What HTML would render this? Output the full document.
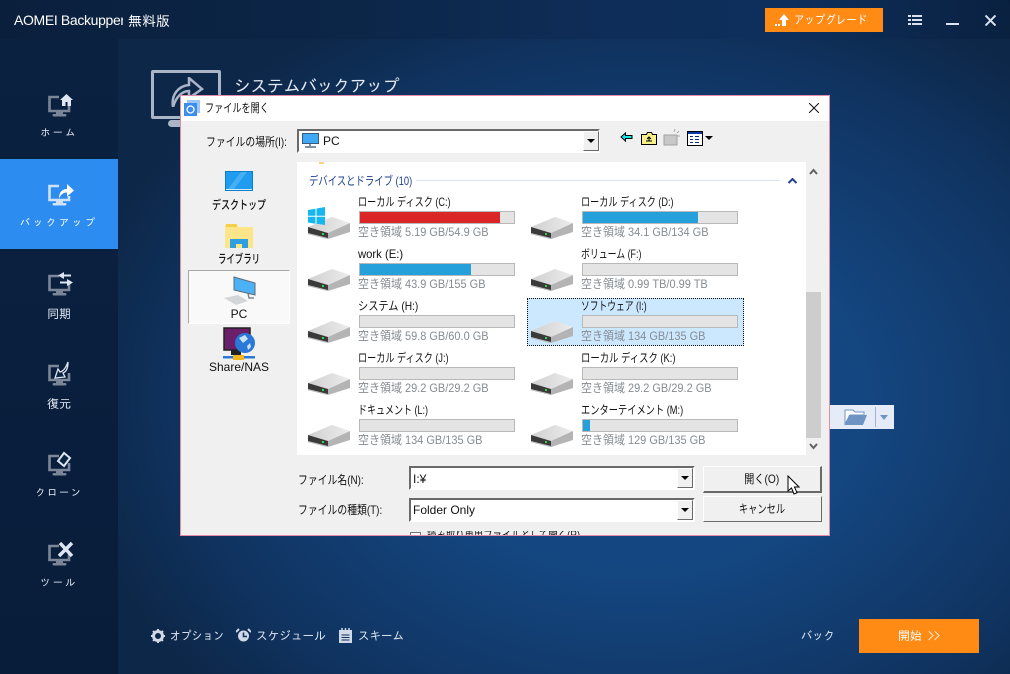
<!DOCTYPE html>
<html lang="ja"><head><meta charset="utf-8"><title>AOMEI Backupper</title>
<style>
html,body{margin:0;padding:0;width:1010px;height:674px;overflow:hidden;background:#0a1f3d}
*{box-sizing:border-box}
body{font-family:"Liberation Sans","Noto Sans CJK JP",sans-serif;font-size:12px;position:relative}
.a{position:absolute;white-space:nowrap}
#main{position:absolute;left:118px;top:39px;width:892px;height:635px;background:radial-gradient(ellipse 570px 440px at 520px 360px,#164c8c 0%,#144680 40%,#103462 78%,#0d2748 100%)}
#top{position:absolute;left:0;top:0;width:1010px;height:39px;background:linear-gradient(90deg,#0a1f3c 0%,#0c2648 35%,#0e2d58 60%,#0e2f5c 78%,#0a2140 100%);border-top-right-radius:6px}
#side{position:absolute;left:0;top:39px;width:118px;height:635px;background:linear-gradient(180deg,#0b2140,#081d3a)}
.nl{position:absolute;left:0;width:118px;text-align:center;color:#e4ebf5;font-size:10px;line-height:14px;font-family:"IPAGothic","Noto Sans CJK JP",sans-serif}
.ni{position:absolute;left:47px;width:28px;height:28px}
.f{position:absolute;line-height:14px;color:#111;white-space:nowrap;transform:scaleX(var(--s,1));transform-origin:0 50%}
.c{transform-origin:50% 50%;text-align:center}
.bar{position:absolute;width:156px;height:13px;background:#e4e4e4;border:1px solid #b8b8b8}
.bar i{display:block;height:11px;background:#26a0da}
.free{position:absolute;color:#868c92;line-height:14px;white-space:nowrap;transform:scaleX(.915);transform-origin:0 50%}
.d{position:absolute;width:43px;height:24px}
.cb{position:absolute;background:#fff;border:2px solid;border-color:#6a6a6a #fff #fff #6a6a6a}
.dd{position:absolute;width:16px;background:#f0f0f0;border:1px solid;border-color:#fff #6a6a6a #6a6a6a #fff}
.dd:after{content:"";position:absolute;left:3px;top:7px;border:4px solid transparent;border-top:4px solid #000;border-bottom:0}
.btn{position:absolute;left:703px;width:119px;background:#f0f0f0;border:1px solid;border-color:#fff #6a6a6a #6a6a6a #fff;text-align:center;color:#111;line-height:24px}
.btn span{display:inline-block;transform:scaleX(var(--s,1))}
.j{font-family:"IPAGothic","Noto Sans CJK JP",sans-serif}
</style></head><body>
<svg width="0" height="0" style="position:absolute"><defs>
<linearGradient id="tp" x1="0" y1="0" x2="1" y2="0"><stop offset="0" stop-color="#d0d0d0"/><stop offset="1" stop-color="#ececec"/></linearGradient>
<symbol id="drive" viewBox="0 0 43 24"><path d="M1 11L25 1L43 7L21 17Z" fill="url(#tp)"/><path d="M21 17L43 7V16L21 23Z" fill="#b4b4b4"/><path d="M1 11L21 17V23L1 18Z" fill="#3a3a3a"/><path d="M1 17L21 22V23L1 18Z" fill="#c4c4c4"/><rect x="15" y="17" width="2" height="2" fill="#35d04a"/></symbol>
<symbol id="mon" viewBox="0 0 28 28"><path d="M12 7H2.500V21H22V14" fill="none" stroke="#7b8798" stroke-width="2.600"/><path d="M9 22h7v2H9z" fill="#7b8798"/><rect x="5.500" y="24" width="14" height="2.500" rx="1.200" fill="#7b8798"/></symbol>
</defs></svg>

<div id="main"></div>
<div id="top"></div>
<div id="side"></div>

<div class="a" style="left:14px;top:12px;width:109px;overflow:hidden;color:#fff;font-size:14px;line-height:16px;letter-spacing:-.35px">AOMEI Backupper</div>
<div class="a j" style="left:128px;top:13px;color:#fff;font-size:14px;line-height:16px">無料版</div>

<div class="a" style="left:765px;top:8px;width:118px;height:24px;background:#ff8a14"></div>
<svg class="a" style="left:775px;top:13px" width="16" height="14"><path d="M9 1l5 6h-3v6H7V7H4z M0 11h2v2H0z M3 11h2v2H3z" fill="#fff"/></svg>
<div class="f j" style="left:794px;top:13px;color:#fff;--s:.87">アップグレード</div>
<svg class="a" style="left:908px;top:15px" width="14" height="11" fill="#dbe3f0"><rect x="0" y="0" width="3" height="2"/><rect x="4" y="0" width="10" height="2"/><rect x="0" y="4" width="3" height="2"/><rect x="4" y="4" width="10" height="2"/><rect x="0" y="8" width="3" height="2"/><rect x="4" y="8" width="10" height="2"/></svg>
<div class="a" style="left:946px;top:23px;width:13px;height:2px;background:#dbe3f0"></div>
<svg class="a" style="left:985px;top:15px" width="11" height="11"><path d="M0.500 0.500L10.500 10.500M10.500 0.500L0.500 10.500" stroke="#dbe3f0" stroke-width="2"/></svg>

<!-- nav -->
<div class="a" style="left:0;top:159px;width:118px;height:90px;background:#2d8cf0"></div>
<svg class="ni" style="top:90px" viewBox="0 0 28 28"><use href="#mon"/><path d="M13 10l6.500-6 6.500 6h-2v6h-3.500v-4h-2v4H15v-6z" fill="#e0e7f2"/></svg>
<div class="nl" style="top:126px;letter-spacing:2.500px">ホーム</div>
<svg class="ni" style="top:179px" viewBox="0 0 28 28"><path d="M12 7H2.500V21H22V17" fill="none" stroke="#cfe2fa" stroke-width="2.600"/><path d="M9 22h7v2H9z" fill="#cfe2fa"/><rect x="5.500" y="24" width="14" height="2.500" rx="1.200" fill="#cfe2fa"/><path d="M12 20c0-7 3-10 8-10V5l7 6.500-7 6v-4c-3 0-6 1-8 6.500z" fill="#fff"/></svg>
<div class="nl" style="top:216px;letter-spacing:3px;color:#fff">バックアップ</div>
<svg class="ni" style="top:269px" viewBox="0 0 28 28"><use href="#mon"/><path d="M17 3l-6 3.500 6 3.500v-2.500h7v-2h-7zM20 10l6 3.500-6 3.500v-2.500h-7v-2h7z" fill="#dde5f0"/></svg>
<div class="nl" style="top:307px;font-size:12px">同期</div>
<svg class="ni" style="top:359px" viewBox="0 0 28 28"><use href="#mon"/><path d="M21 3c0 7-2 10-5 11l2 4-10 1 3-9 2 3c4-1 6-5 8-10z" fill="#0c2444" stroke="#dde5f0" stroke-width="1.300"/></svg>
<div class="nl" style="top:397px;font-size:12px">復元</div>
<svg class="ni" style="top:449px" viewBox="0 0 28 28"><use href="#mon"/><path d="M11 12l6-8 6 5-6 8z" fill="#0c2444" stroke="#dde5f0" stroke-width="2"/></svg>
<div class="nl" style="top:486px;letter-spacing:1.800px;">クローン</div>
<svg class="ni" style="top:539px" viewBox="0 0 28 28"><use href="#mon"/><path d="M13 4l12 13M25 4L12 17" stroke="#dde5f0" stroke-width="3.500"/></svg>
<div class="nl" style="top:576px;letter-spacing:2.500px">ツール</div>

<!-- header behind dialog -->
<div class="a" style="left:151px;top:70px;width:70px;height:49px;border:3px solid #a9b5c6;border-radius:2px"></div>
<svg class="a" style="left:170px;top:77px" width="36" height="30"><path d="M3 30c-2-12 5-21 16-22V1l13 11-13 9v-7C12 14 6 20 3 30z" fill="none" stroke="#a9b5c6" stroke-width="2.500"/></svg>
<div class="a" style="left:168px;top:120px;width:26px;height:7px;background:#a9b5c6;border-radius:4px"></div>
<div class="a j" style="left:234px;top:75px;color:#e3e9f2;font-size:17px;line-height:24px;letter-spacing:-.5px">システムバックアップ</div>
<div class="a" style="left:830px;top:405px;width:64px;height:24px;background:#e5ecf8"></div>
<svg class="a" style="left:844px;top:409px" width="24" height="17"><path d="M1 1h8l2 2h9v3H6L1 15z" fill="#fff" stroke="#6f94c3"/><path d="M5 6h18l-4 10H1z" fill="#6f94c3"/></svg>
<div class="a" style="left:875px;top:407px;width:1px;height:20px;background:#9db4d2"></div>
<div class="a" style="left:880px;top:415px;border:4px solid transparent;border-top:5px solid #6f94c3;border-bottom:0"></div>

<!-- bottom -->
<svg class="a" style="left:151px;top:629px" width="14" height="14"><circle cx="7" cy="7" r="4.500" fill="none" stroke="#cfd9e8" stroke-width="3"/><path d="M7 0v14M0 7h14M2 2l10 10M12 2L2 12" stroke="#cfd9e8" stroke-width="2" stroke-dasharray="2.500 9 2.500"/></svg>
<div class="f j" style="left:170px;top:629px;color:#dfe6f1;--s:.9">オプション</div>
<svg class="a" style="left:236px;top:628px" width="15" height="15"><circle cx="7.500" cy="8" r="5.500" fill="#cfd9e8"/><path d="M7.500 4.500V8.500H11" fill="none" stroke="#11305a" stroke-width="1.500"/><path d="M0 4l3-3M15 4l-3-3" stroke="#cfd9e8" stroke-width="2"/></svg>
<div class="f j" style="left:256px;top:629px;color:#dfe6f1;--s:.97">スケジュール</div>
<svg class="a" style="left:339px;top:628px" width="13" height="15"><rect y="2" width="13" height="13" fill="#cfd9e8"/><path d="M3 0v4M6.500 0v4M10 0v4" stroke="#cfd9e8" stroke-width="1.500"/><path d="M2.500 7h8M2.500 9.500h8M2.500 12h8" stroke="#11305a"/></svg>
<div class="f j" style="left:358px;top:629px;color:#dfe6f1;--s:.96">スキーム</div>
<div class="f j" style="left:801px;top:629px;color:#dfe6f1;--s:.94">バック</div>
<div class="a j" style="left:859px;top:619px;width:120px;height:34px;background:#ff8a14;color:#fff;text-align:center;line-height:34px;font-size:12px">開始 &gt;&gt;</div>

<!-- dialog -->
<div class="a" style="left:180px;top:95px;width:650px;height:441px;background:#f0f0f0;border:1px solid #e58aa9;overflow:hidden"></div>
<div class="a" style="left:181px;top:96px;width:648px;height:25px;background:#fff"></div>
<svg class="a" style="left:184px;top:100px" width="16" height="16"><rect x="3" y="0" width="13" height="13" fill="#9cc6f5"/><rect x="0" y="3" width="13" height="13" fill="#3b8df0"/><circle cx="6.500" cy="9.500" r="3.500" fill="none" stroke="#fff" stroke-width="1.300"/></svg>
<div class="f" style="left:205px;top:101px;--s:.76">ファイルを開く</div>
<svg class="a" style="left:809px;top:103px" width="10" height="10"><path d="M0 0L10 10M10 0L0 10" stroke="#111" stroke-width="1"/></svg>

<div class="f" style="left:206px;top:135px;--s:.82">ファイルの場所(I):</div>
<div class="cb" style="left:297px;top:129px;width:303px;height:24px"></div>
<svg class="a" style="left:302px;top:133px" width="17" height="15"><rect x="0.500" y="0.500" width="16" height="10" fill="#3fa9f5" stroke="#3a5a78"/><path d="M8 11v2M3 14h11" stroke="#5a6b7a" stroke-width="1.500"/></svg>
<div class="f" style="left:323px;top:134px">PC</div>
<div class="dd" style="left:583px;top:131px;height:20px"></div>
<svg class="a" style="left:620px;top:132px" width="13" height="10"><path d="M1 5l4.500-4v2.500h6.500v3H5.500V9z" fill="#19e6e6" stroke="#000"/></svg>
<svg class="a" style="left:641px;top:131px" width="16" height="14"><path d="M0.500 3.500h5l1-2h4l1 2h4v10h-15z" fill="#f8f08a" stroke="#000"/><path d="M5 10h6M8 6v4M6 8l2-2 2 2" fill="none" stroke="#000"/></svg>
<svg class="a" style="left:663px;top:129px" width="17" height="17"><path d="M1 6h13v10H1z" fill="#c8c8c8" stroke="#a0a0a0"/><path d="M14 4l2-2M14 7h3M11 3l1-3" stroke="#a8a8a8"/></svg>
<svg class="a" style="left:687px;top:131px" width="16" height="15"><rect x="0.500" y="0.500" width="15" height="14" fill="#fff" stroke="#000"/><rect x="1" y="1" width="14" height="2" fill="#0a3aa8"/><path d="M3 5.500h3M8 5.500h4M3 8.500h3M8 8.500h4M3 11.500h3M8 11.500h4" stroke="#0a2a88"/></svg>
<div class="a" style="left:705px;top:136px;border:4px solid transparent;border-top:4px solid #000;border-bottom:0"></div>

<!-- places -->
<svg class="a" style="left:225px;top:171px" width="28" height="20"><rect width="28" height="20" fill="#0d7fc9"/><rect x="1" y="1" width="26" height="17" fill="#1f9cf0"/><path d="M3 18L16 1h6L9 18z" fill="#45aff2"/><rect x="1" y="18" width="26" height="1" fill="#d5ecfb"/></svg>
<div class="f c" style="left:188px;top:198px;width:102px;font-weight:500;--s:.75">デスクトップ</div>
<svg class="a" style="left:225px;top:223px" width="28" height="25"><path d="M0 2h12l2 2h14v21H0z" fill="#fde68a"/><rect x="1" y="1" width="11" height="3" fill="#f5cf4a"/><path d="M5 25V16h18v9h-6v-4h-6v4z" fill="#2f9fe0"/></svg>
<div class="f c" style="left:188px;top:252px;width:102px;font-weight:500;--s:.7">ライブラリ</div>
<div class="a" style="left:188px;top:270px;width:102px;height:54px;background:#f9f9f9;border:1px solid;border-color:#a8a8a8 #fff #fff #a8a8a8"></div>
<svg class="a" style="left:224px;top:276px" width="32" height="30"><path d="M24 17l1 5h5" fill="none" stroke="#7a8794" stroke-width="1.500"/><path d="M10 1l21 6v12L10 14z" fill="#4db2f5" stroke="#5c6a78"/><path d="M0 22l14-3 10 6-12 4z" fill="#d2d6d9"/></svg>
<div class="f c" style="left:188px;top:307px;width:102px">PC</div>
<svg class="a" style="left:223px;top:327px" width="32" height="33"><path d="M1 1h26v22H1z" fill="#6b1f6b" stroke="#222" stroke-width="1.500"/><path d="M8 23h10v5H8z" fill="#222"/><circle cx="22" cy="16" r="10" fill="#2a78d8"/><path d="M16 11l6-3 3 4-5 4zM24 19l3-3 1 4-3 3z" fill="#c8e2f8"/><rect x="0" y="29" width="32" height="2.500" fill="#2a78d8"/><rect x="10" y="28" width="11" height="5" fill="#f5b51e"/></svg>
<div class="f c" style="left:188px;top:360px;width:102px">Share/NAS</div>

<!-- list -->
<div class="a" style="left:297px;top:162px;width:509px;height:293px;background:#fff"></div>
<div class="a" style="left:319px;top:162px;width:5px;height:2px;background:#f5d67a"></div>
<div class="f" style="left:309px;top:174px;color:#1f3f8f;--s:.78">デバイスとドライブ (10)</div>
<div class="a" style="left:416px;top:180px;width:364px;height:1px;background:#d9e4f2"></div>
<svg class="a" style="left:788px;top:178px" width="9" height="6"><path d="M0.500 5L4.500 1l4 4" fill="none" stroke="#1f3f8f" stroke-width="2"/></svg>

<div class="a" style="left:527px;top:298px;width:217px;height:48px;background:#cce8ff;border:1px dotted #111"></div>

<!-- drives left -->
<svg class="d" style="left:307px;top:216px"><use href="#drive"/></svg>
<svg class="a" style="left:308px;top:207px" width="17" height="18" fill="#15b7ee"><path d="M0 3l7.500-1.200v7H0zM8.500 1.500L17 0v8.800H8.500zM0 9.800h7.500v7L0 15.500zM8.500 9.800H17V18l-8.500-1.300z"/></svg>
<div class="f" style="left:358px;top:195px;--s:.76">ローカル ディスク (C:)</div>
<div class="bar" style="left:359px;top:211px"><i style="width:140px;background:#da2626"></i></div>
<div class="free" style="left:358px;top:225px">空き領域 5.19 GB/54.9 GB</div>

<svg class="d" style="left:307px;top:268px"><use href="#drive"/></svg>
<div class="f" style="left:358px;top:247px;--s:.94">work (E:)</div>
<div class="bar" style="left:359px;top:263px"><i style="width:111px"></i></div>
<div class="free" style="left:358px;top:277px">空き領域 43.9 GB/155 GB</div>

<svg class="d" style="left:307px;top:320px"><use href="#drive"/></svg>
<div class="f" style="left:358px;top:299px;--s:.85">システム (H:)</div>
<div class="bar" style="left:359px;top:315px"></div>
<div class="free" style="left:358px;top:329px">空き領域 59.8 GB/60.0 GB</div>

<svg class="d" style="left:307px;top:372px"><use href="#drive"/></svg>
<div class="f" style="left:358px;top:351px;--s:.76">ローカル ディスク (J:)</div>
<div class="bar" style="left:359px;top:367px"></div>
<div class="free" style="left:358px;top:381px">空き領域 29.2 GB/29.2 GB</div>

<svg class="d" style="left:307px;top:424px"><use href="#drive"/></svg>
<div class="f" style="left:358px;top:403px;--s:.75">ドキュメント (L:)</div>
<div class="bar" style="left:359px;top:419px"></div>
<div class="free" style="left:358px;top:433px">空き領域 134 GB/135 GB</div>

<!-- drives right -->
<svg class="d" style="left:530px;top:216px"><use href="#drive"/></svg>
<div class="f" style="left:581px;top:195px;--s:.76">ローカル ディスク (D:)</div>
<div class="bar" style="left:582px;top:211px"><i style="width:115px"></i></div>
<div class="free" style="left:581px;top:225px">空き領域 34.1 GB/134 GB</div>

<svg class="d" style="left:530px;top:268px"><use href="#drive"/></svg>
<div class="f" style="left:581px;top:247px;--s:.74">ボリューム (F:)</div>
<div class="bar" style="left:582px;top:263px"></div>
<div class="free" style="left:581px;top:277px">空き領域 0.99 TB/0.99 TB</div>

<svg class="d" style="left:530px;top:320px"><use href="#drive"/></svg>
<div class="f" style="left:581px;top:299px;--s:.73">ソフトウェア (I:)</div>
<div class="bar" style="left:582px;top:315px"></div>
<div class="free" style="left:581px;top:329px">空き領域 134 GB/135 GB</div>

<svg class="d" style="left:530px;top:372px"><use href="#drive"/></svg>
<div class="f" style="left:581px;top:351px;--s:.78">ローカル ディスク (K:)</div>
<div class="bar" style="left:582px;top:367px"></div>
<div class="free" style="left:581px;top:381px">空き領域 29.2 GB/29.2 GB</div>

<svg class="d" style="left:530px;top:424px"><use href="#drive"/></svg>
<div class="f" style="left:581px;top:403px;--s:.77">エンターテイメント (M:)</div>
<div class="bar" style="left:582px;top:419px"><i style="width:7px"></i></div>
<div class="free" style="left:581px;top:433px">空き領域 129 GB/135 GB</div>

<!-- scrollbar -->
<div class="a" style="left:806px;top:292px;width:15px;height:146px;background:#cdcdcd"></div>
<svg class="a" style="left:809px;top:168px" width="9" height="7"><path d="M1 6l3.500-4 3.500 4" fill="none" stroke="#606060" stroke-width="2"/></svg>
<svg class="a" style="left:809px;top:443px" width="9" height="7"><path d="M1 1l3.500 4 3.500-4" fill="none" stroke="#606060" stroke-width="2"/></svg>

<!-- bottom fields -->
<div class="f" style="left:298px;top:473px;--s:.82">ファイル名(N):</div>
<div class="cb" style="left:409px;top:466px;width:286px;height:24px"></div>
<div class="f" style="left:413px;top:472px">I:¥</div>
<div class="dd" style="left:677px;top:468px;height:20px"></div>
<div class="f" style="left:298px;top:503px;--s:.82">ファイルの種類(T):</div>
<div class="cb" style="left:409px;top:498px;width:286px;height:24px"></div>
<div class="f" style="left:413px;top:503px">Folder Only</div>
<div class="dd" style="left:677px;top:500px;height:20px"></div>
<div class="btn" style="top:466px;height:27px;border-width:1px 2px 2px 1px"><span style="--s:.85">開く(O)</span></div>
<div class="btn" style="top:496px;height:26px"><span style="--s:.77">キャンセル</span></div>
<div class="a" style="left:410px;top:531px;width:420px;height:4px;overflow:hidden"><div class="a" style="left:0;top:1px;width:11px;height:11px;border:1px solid #777;background:#fff"></div><div class="f" style="left:17px;top:-3px;--s:.78">読み取り専用ファイルとして開く(R)</div></div>
<svg class="a" style="left:787px;top:475px" width="13" height="21"><path d="M1 1v15l3.500-3 2.500 6 3-1.300-2.500-5.700H12z" fill="#fff" stroke="#000"/></svg>
</body></html>
